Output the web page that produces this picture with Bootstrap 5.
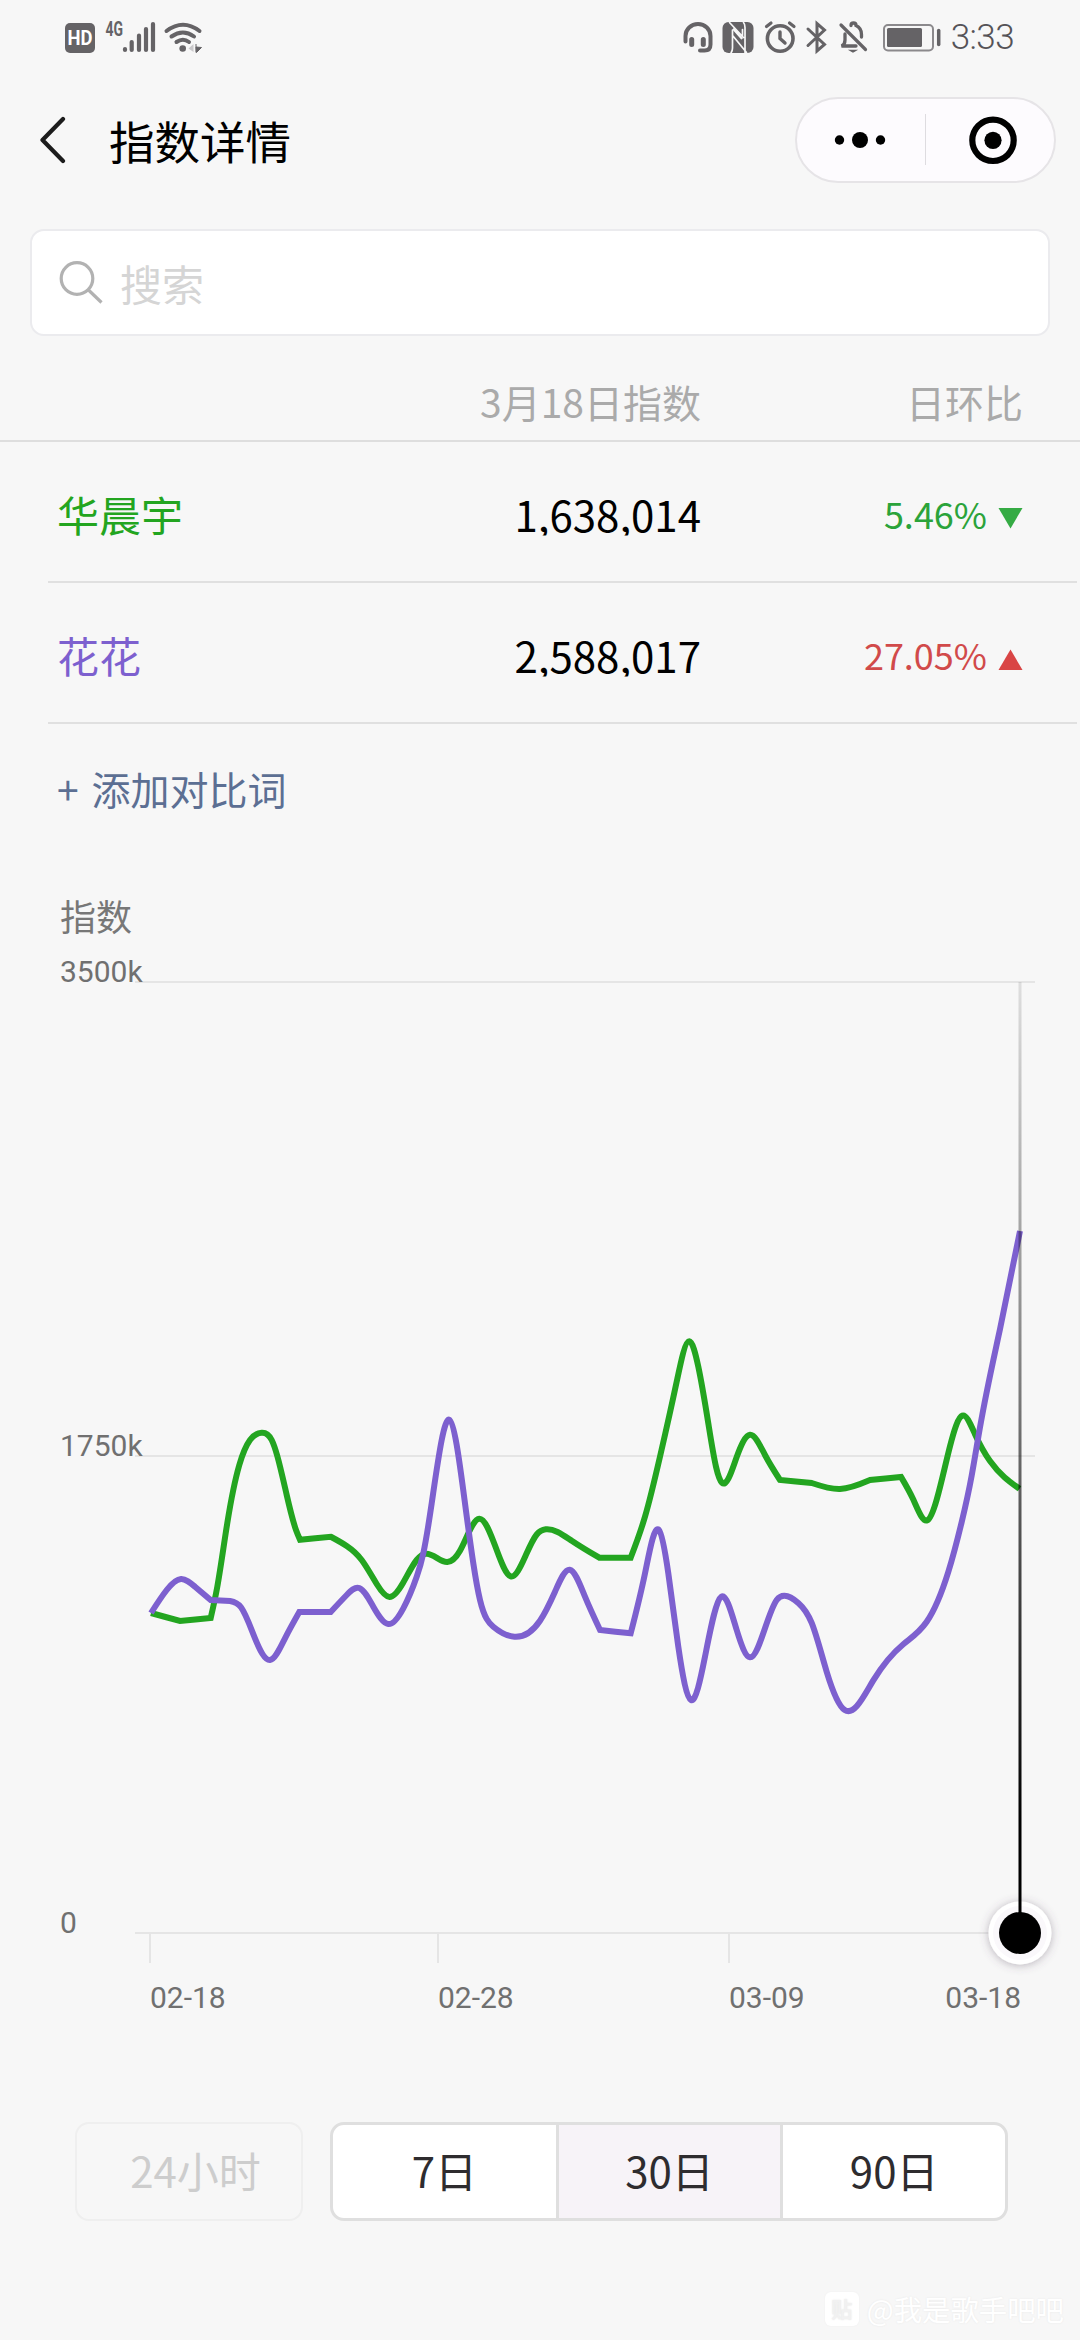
<!DOCTYPE html>
<html lang="zh-CN">
<head>
<meta charset="utf-8">
<meta name="viewport" content="width=device-width, initial-scale=1">
<title>指数详情</title>
<link href="https://cdn.jsdelivr.net/npm/bootstrap@5.3.0/dist/css/bootstrap.min.css" rel="stylesheet">
<style>
body{background:#f7f7f7;color:#000;font-family:"Noto Sans CJK SC",sans-serif;width:1080px;height:2340px;overflow:hidden}
svg{display:block;flex:none}
.status-bar{height:74px;padding:0 66px 0 60px}
.clock{font:300 35px/50px Roboto,sans-serif;color:#555357;letter-spacing:-.6px;padding-top:2px}
.top-nav{height:132px;padding:0 24px 0 40px}
.page-title{font-size:45.5px;line-height:60px}
.capsule{width:261px;height:86px;background:#fdfbfe;border:2px solid #e6e4e7;border-radius:43px}
.search-box{margin:23px 30px 0;height:107px;background:#fff;border:2px solid #ebebee;border-radius:14px;padding:0 26px}
.search-box span{font-size:42px;line-height:60px;color:#d5d5d5}
.head-row{height:106px;border-bottom:2px solid #dedede;color:#aaa;font-size:39px;padding:35px 57px 0 48px}
.head-row>*,.word-row>*{line-height:60px}
.col-pct{width:322px}
.word-row{height:141px;margin:0 3px 0 48px;padding:4px 54px 0 9px;border-bottom:2px solid #e0e0e0}
.word-name,.word-num{font-size:42px}
.word-num{clip-path:inset(0 0 8px 0)}
.word-pct{font-size:36px;padding-bottom:2px}
.c-green{color:#23a520}.c-purple{color:#7d60cf}
.c-down{color:#2ba33a}.c-up{color:#d14a4a}
.add-word{font-size:39px;line-height:60px;color:#5c6f93;padding:34px 0 0 57px;height:154px;word-spacing:4px}
.axis-label{font:30px Roboto,sans-serif;fill:#707070}
.axis-title{font:36px "Noto Sans CJK SC",sans-serif;fill:#777}
.range-bar{padding:0 72px 0 75px;height:99px;margin-top:44px}
.range-off{width:228px;border:2px solid #efefef;border-radius:14px;color:#cdcdcd;font-size:42px;padding:0 0 4px 13px}
.range-group{width:678px;border:3px solid #dfdfdf;border-radius:14px;background:#fff;color:#2e2c2f;font-size:42px}
.range-group div{padding-bottom:4px}
.range-group div+div{border-left:3px solid #dfdfdf}
.range-group .picked{background:#f7f3f8}
.credit{margin:68px 16px 0 0;color:#fff;font-size:28.4px;line-height:40px;text-shadow:0 0 2px #e6e6e6}
.credit b{width:34px;height:34px;border-radius:6px;background:#fff;color:#f1f1f1;font-size:21px;line-height:32px;box-shadow:0 0 2px #eee}
</style>
</head>
<body>
<header class="status-bar d-flex align-items-center justify-content-between">
  <svg width="150" height="74" viewBox="60 0 150 74">
    <rect x="65" y="23" width="30" height="30" rx="5" fill="#656366"/>
    <text x="80" y="45" text-anchor="middle" font-family="Roboto" font-weight="700" font-size="20" fill="#fff" textLength="25" lengthAdjust="spacingAndGlyphs">HD</text>
    <text x="105.5" y="36" font-family="Roboto" font-weight="700" font-size="20" fill="#656366" textLength="17.5" lengthAdjust="spacingAndGlyphs">4G</text>
    <path d="M125 49v1M131.700 42v8M139 35.500v14.500M146 29v21M153 24v26" stroke="#656366" stroke-width="4.200" stroke-linecap="round"/>
    <g fill="none" stroke="#656366" stroke-width="4" stroke-linecap="round"><path d="M166.500 31q16.500-12.500 33 0M171.500 36.500q11.500-8 22.500 0M176.500 42q6.500-4.500 12.500 0"/></g>
    <circle cx="182.700" cy="48.500" r="3.300" fill="#656366"/>
    <path d="M188.500 48.500l5-4.500v8z" fill="#c9c8ca"/><path d="M196 44v8.500M196 47l5.500.5-5 5z" fill="#656366" stroke="#656366" stroke-width="1"/>
  </svg>
  <div class="d-flex align-items-center">
    <svg width="268" height="74" viewBox="679 0 268 74" fill="none" stroke="#656366" stroke-width="4" stroke-linecap="round">
      <path d="M685.500 41.500v-5.500a12.500 12 0 0 1 25 0V44.500q0 6-6 6h-4.500"/><path d="M691.700 39.500v5M703.300 39.500v5" stroke-width="5"/>
      <rect x="722.500" y="22" width="31" height="31" rx="6" fill="#656366" stroke="none"/>
      <path d="M729.500 22.500l14 15M732.500 30v18q0 3-1.500 5M742.500 29.500v6M733 36l13.500 16.500M743.500 22.500q1.500 1.500 1.500 5v25" stroke="#f7f7f7" stroke-width="1.700"/>
      <path d="M734 29.500l7.500 8.500" stroke="#f7f7f7" stroke-width="2.600"/>
      <circle cx="780.200" cy="38.500" r="12.800" stroke-width="3.600"/><path d="M780 32v6.500l5 4.500" stroke-width="3.400"/><path d="M766.500 26.500l4.500-3.500M794 26.500l-4.500-3.500" stroke-width="3.200"/>
      <path d="M808 29l16.500 15.500-7.500 6.500V23.500l7.500 6.500L808 45.500" stroke-width="3"/>
      <path d="M841 25l24.500 24.500" stroke-width="3.200"/><path d="M851 25.500q0-2.500 2.500-2.500t2.500 2.500q5.500 2.500 5.500 9v2.500M845 34v6q0 4.500-3.500 6h14.500" stroke-width="3.300"/><path d="M850.500 50.500h5l-2.500 1.500z" stroke-width="1.500" fill="#656366"/>
      <rect x="884" y="25" width="49" height="25.500" rx="4" stroke="#8b898c" stroke-width="2"/><rect x="887" y="28" width="35" height="19" rx="1.500" fill="#656366" stroke="none"/><path d="M938.700 30.500v14" stroke-width="3.500"/>
    </svg>
    <span class="clock ms-1">3:33</span>
  </div>
</header>

<nav class="top-nav d-flex align-items-center justify-content-between">
  <div class="d-flex align-items-center">
    <svg width="69" height="50" viewBox="0 0 69 50"><path d="M23 4L2.500 25 23 46" fill="none" stroke="#1c1c1c" stroke-width="4.200" stroke-linecap="round" stroke-linejoin="round"/></svg>
    <span class="page-title">指数详情</span>
  </div>
  <div class="capsule">
    <svg width="257" height="82" viewBox="797 99 257 82"><circle cx="839.500" cy="140" r="4.700"/><circle cx="860" cy="140" r="8"/><circle cx="880.500" cy="140" r="4.700"/><path d="M925.500 114v51" stroke="#dedce0"/><circle cx="993" cy="140.300" r="20.700" fill="none" stroke="#000" stroke-width="6.200"/><circle cx="993" cy="140.300" r="8.600"/></svg>
  </div>
</nav>

<div class="search-box d-flex align-items-center">
  <svg width="62" height="50" viewBox="58 258 62 50"><g fill="none" stroke="#b2b2b2" stroke-width="3.200"><circle cx="77" cy="278.500" r="15.800"/><path d="M88.500 290l13 12.500"/></g></svg>
  <span>搜索</span>
</div>

<section>
  <div class="head-row d-flex"><span class="flex-grow-1 text-end">3月18日指数</span><span class="col-pct text-end">日环比</span></div>
  <div class="word-row d-flex align-items-center">
    <span class="word-name c-green">华晨宇</span><div class="word-num flex-grow-1 text-end">1,638,014</div>
    <span class="col-pct word-pct c-down d-flex align-items-center justify-content-end">5.46%<svg class="ms-2" width="28" height="32"><path d="M3.500 11h24l-12 20.500z" fill="#35ab44"/></svg></span>
  </div>
  <div class="word-row d-flex align-items-center">
    <span class="word-name c-purple">花花</span><div class="word-num flex-grow-1 text-end">2,588,017</div>
    <span class="col-pct word-pct c-up d-flex align-items-center justify-content-end">27.05%<svg class="ms-2" width="28" height="32"><path d="M3.500 32h24L15.500 11.500z" fill="#d94545"/></svg></span>
  </div>
  <div class="add-word">+ 添加对比词</div>
</section>

<svg id="trend" width="1080" height="1200" viewBox="0 878 1080 1200">
  <defs>
    <linearGradient id="fade" gradientUnits="userSpaceOnUse" x1="0" y1="982" x2="0" y2="1820"><stop offset="0" stop-color="#000" stop-opacity=".1"/><stop offset=".4" stop-color="#000" stop-opacity=".42"/><stop offset="1" stop-color="#000"/></linearGradient>
    <filter id="soft" x="-50%" y="-50%" width="200%" height="200%"><feDropShadow dx="0" dy="1" stdDeviation="5" flood-color="#5a4a5e" flood-opacity=".4"/></filter>
  </defs>
  <text class="axis-title" x="60" y="931">指数</text>
  <path d="M135 982h900M135 1456h900M135 1933h885M150 1933v30M438 1933v30M729 1933v30" stroke="#e5e5e5" stroke-width="2" fill="none"/>
  <g class="axis-label"><text x="60" y="981.500">3500k</text><text x="60" y="1456">1750k</text><text x="60" y="1932.500">0</text>
  <text x="150" y="2008">02-18</text><text x="438" y="2008">02-28</text><text x="729" y="2008">03-09</text><text x="1021" y="2008" text-anchor="end">03-18</text></g>
  <path id="line-a" fill="none" stroke="#23a520" stroke-width="6"/>
  <path id="line-b" fill="none" stroke="#7d60cf" stroke-width="6"/>
  <circle cx="1020" cy="1933" r="31.500" fill="#fff" filter="url(#soft)"/><circle cx="1020" cy="1933" r="27" fill="#faf8fb"/>
  <rect x="1018.500" y="982" width="3" height="940" fill="url(#fade)"/>
  <circle cx="1020" cy="1933" r="21"/>
</svg>

<div class="range-bar d-flex justify-content-between">
  <div class="range-off d-flex align-items-center justify-content-center">24小时</div>
  <div class="range-group d-flex overflow-hidden text-center">
    <div class="flex-fill w-100 d-flex align-items-center justify-content-center">7日</div>
    <div class="picked flex-fill w-100 d-flex align-items-center justify-content-center">30日</div>
    <div class="flex-fill w-100 d-flex align-items-center justify-content-center">90日</div>
  </div>
</div>
<footer class="credit d-flex justify-content-end align-items-center"><b class="text-center me-2">贴</b><span>@我是歌手吧吧</span></footer>

<script src="https://cdn.jsdelivr.net/npm/bootstrap@5.3.0/dist/js/bootstrap.bundle.min.js"></script>
<script>
// Natural cubic spline through the points, as a list of bezier commands
function spline(p){
  const n=p.length,h=[],d=[],m=[];
  for(let i=0;i<n-1;i++){h.push(p[i+1][0]-p[i][0]);d.push((p[i+1][1]-p[i][1])/h[i]);m.push(d[i]);}
  m.push(d[n-2]);
  for(let k=0;k<80;k++){
    m[0]=(3*d[0]-m[1])/2;
    for(let i=1;i<n-1;i++){const u=1/h[i-1],w=1/h[i];m[i]=(3*(d[i-1]*u+d[i]*w)-u*m[i-1]-w*m[i+1])/(2*(u+w));}
    m[n-1]=(3*d[n-2]-m[n-2])/2;
  }
  let s='';
  for(let i=0;i<n-1;i++){const t=h[i]/3,[x,y]=p[i],[X,Y]=p[i+1];s+='C'+[x+t,y+m[i]*t,X-t,Y-m[i+1]*t,X,Y].map(q=>q.toFixed(2)).join(' ');}
  return s;
}
// Splits the series at its corners, so that each piece is smooth on its own
function curve(v,corners){
  let s='M'+v[0]+' '+v[1],part=[];
  for(let i=0;i<v.length;i+=2){
    part.push([v[i],v[i+1]]);
    if(part.length>1&&(corners.includes(v[i])||i===v.length-2)){s+=spline(part);part=[[v[i],v[i+1]]];}
  }
  return s;
}
const a=[151,1613,180,1621,210.7,1618,217.3,1586.7,227.3,1523,239.3,1465,250,1440,261.7,1432.7,271.7,1440,277.3,1456,286.7,1495,296,1530,300,1539.7,330.7,1536.7,346.7,1546,361.7,1560,376.7,1584,389.5,1597,403,1583,416.7,1560,426,1553.7,447.3,1562,460,1550.7,479.3,1518.7,496.7,1550,510.7,1576.3,525,1557,536.7,1534.5,545.7,1529.3,571.7,1540.7,599.3,1557.7,630.7,1557.7,645,1516.7,660,1456.7,676.7,1381.7,689.3,1341.3,698.3,1366.7,708.3,1423.3,716,1466.7,722,1482.7,736.7,1457,750,1434.7,765,1455,780,1480,811.7,1483,840,1489,870,1480,901,1476.9,913.3,1499.6,927.3,1520.3,936.7,1499.6,950,1446.2,962.3,1415.6,975,1434.2,990,1461,1019.5,1488.8];
const b=[151,1613,166.7,1590,181,1579,195,1586.7,210.7,1600,230,1601,241,1607.3,255,1638.3,270,1660,285,1638.3,299.3,1612,330.7,1612,346.7,1595,359.3,1588,373.3,1606.7,388.3,1624,403.3,1608.3,416.7,1576.7,423.3,1553.3,431.7,1503.3,441.7,1440,449.3,1419.7,456.7,1445,465,1503.3,473.3,1563.3,480,1600,493.3,1626.7,514.5,1636.7,540,1620.7,555,1591.7,569.7,1569.7,585,1596.7,600,1630,630.7,1633.3,645,1573.3,658.7,1529.7,668.3,1573.3,678.3,1646.7,691,1700,705,1656.7,721.3,1596.7,736.7,1630,750,1657.3,765,1628.3,776.7,1600,784.5,1595.7,798.3,1602.9,811.7,1622.9,826.7,1671.8,844.7,1710,873.3,1680.4,903.3,1644.2,926.7,1621.8,948.3,1571.9,961.7,1522,971.7,1475.5,980,1427.3,1000,1329.1,1020,1231];
document.getElementById('line-a').setAttribute('d',curve(a,[180,210.7,300,330.7,599.3,630.7,780,811.7,870,901]));
document.getElementById('line-b').setAttribute('d',curve(b,[210.7,230,299.3,330.7,600,630.7]));
</script>
</body>
</html>
